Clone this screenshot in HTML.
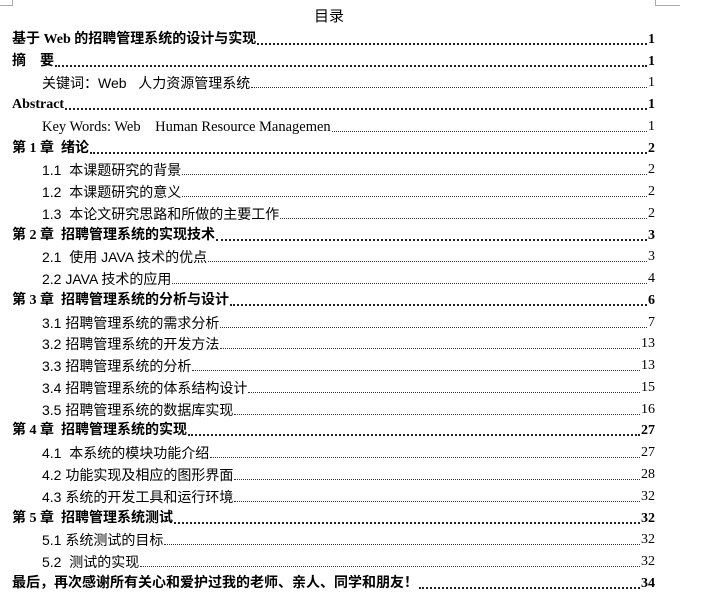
<!DOCTYPE html>
<html><head><meta charset="utf-8"><style>
body{margin:0;width:701px;height:601px;background:#fff;position:relative;overflow:hidden;font-family:"Liberation Serif","Noto Sans CJK SC",serif;color:#000}
.r{position:absolute;left:12px;width:643px;height:22px;display:flex;align-items:flex-end;font-size:14px;line-height:22px;white-space:nowrap}
.r.s{left:42px;width:613px;font-family:"Liberation Sans","Noto Sans CJK SC",sans-serif;font-size:14px}
.r.b{font-weight:bold}
.d{flex:1;border-bottom:1px dotted #333;margin:0 1px 6px 1px;height:0}
.b .d{border-bottom:2px dotted #222}
.n{font-family:"Liberation Serif",serif;font-size:14px}
.t{position:absolute;left:314px;top:5px;font-size:15px;font-family:"Liberation Sans","Noto Sans CJK SC",sans-serif}
.c1{position:absolute;left:0;top:5px;width:12px;height:0;border-top:1px solid #aaa}
.c1v{position:absolute;left:12px;top:0;height:6px;border-left:1px solid #aaa}
.c2{position:absolute;left:655px;top:5px;width:25px;border-top:1px solid #aaa}
.c2v{position:absolute;left:655px;top:0;height:6px;border-left:1px solid #aaa}
</style></head><body>
<div class="c1"></div><div class="c1v"></div><div class="c2"></div><div class="c2v"></div>
<div class="t">目录</div>
<div class="r b" style="top:29px"><span>基于 Web 的招聘管理系统的设计与实现</span><span class="d"></span><span class="n">1</span></div>
<div class="r b" style="top:51px"><span>摘&nbsp;&nbsp;&nbsp;&nbsp;要</span><span class="d"></span><span class="n">1</span></div>
<div class="r s" style="top:72px"><span>关键词：Web&nbsp;&nbsp;&nbsp;人力资源管理系统</span><span class="d"></span><span class="n">1</span></div>
<div class="r b" style="top:94px"><span>Abstract</span><span class="d"></span><span class="n">1</span></div>
<div class="r s" style="top:116px;font-family:'Liberation Serif',serif;font-size:14.5px"><span>Key Words: Web&nbsp;&nbsp;&nbsp;&nbsp;Human Resource Managemen</span><span class="d"></span><span class="n">1</span></div>
<div class="r b" style="top:138px"><span>第 1 章&nbsp;&nbsp;绪论</span><span class="d"></span><span class="n">2</span></div>
<div class="r s" style="top:159px"><span>1.1&nbsp;&nbsp;本课题研究的背景</span><span class="d"></span><span class="n">2</span></div>
<div class="r s" style="top:181px"><span>1.2&nbsp;&nbsp;本课题研究的意义</span><span class="d"></span><span class="n">2</span></div>
<div class="r s" style="top:203px"><span>1.3&nbsp;&nbsp;本论文研究思路和所做的主要工作</span><span class="d"></span><span class="n">2</span></div>
<div class="r b" style="top:225px"><span>第 2 章&nbsp;&nbsp;招聘管理系统的实现技术</span><span class="d"></span><span class="n">3</span></div>
<div class="r s" style="top:246px"><span>2.1&nbsp;&nbsp;使用 JAVA 技术的优点</span><span class="d"></span><span class="n">3</span></div>
<div class="r s" style="top:268px"><span>2.2 JAVA 技术的应用</span><span class="d"></span><span class="n">4</span></div>
<div class="r b" style="top:290px"><span>第 3 章&nbsp;&nbsp;招聘管理系统的分析与设计</span><span class="d"></span><span class="n">6</span></div>
<div class="r s" style="top:312px"><span>3.1 招聘管理系统的需求分析</span><span class="d"></span><span class="n">7</span></div>
<div class="r s" style="top:333px"><span>3.2 招聘管理系统的开发方法</span><span class="d"></span><span class="n">13</span></div>
<div class="r s" style="top:355px"><span>3.3 招聘管理系统的分析</span><span class="d"></span><span class="n">13</span></div>
<div class="r s" style="top:377px"><span>3.4 招聘管理系统的体系结构设计</span><span class="d"></span><span class="n">15</span></div>
<div class="r s" style="top:399px"><span>3.5 招聘管理系统的数据库实现</span><span class="d"></span><span class="n">16</span></div>
<div class="r b" style="top:420px"><span>第 4 章&nbsp;&nbsp;招聘管理系统的实现</span><span class="d"></span><span class="n">27</span></div>
<div class="r s" style="top:442px"><span>4.1&nbsp;&nbsp;本系统的模块功能介绍</span><span class="d"></span><span class="n">27</span></div>
<div class="r s" style="top:464px"><span>4.2 功能实现及相应的图形界面</span><span class="d"></span><span class="n">28</span></div>
<div class="r s" style="top:486px"><span>4.3&nbsp;系统的开发工具和运行环境</span><span class="d"></span><span class="n">32</span></div>
<div class="r b" style="top:508px"><span>第 5 章&nbsp;&nbsp;招聘管理系统测试</span><span class="d"></span><span class="n">32</span></div>
<div class="r s" style="top:529px"><span>5.1 系统测试的目标</span><span class="d"></span><span class="n">32</span></div>
<div class="r s" style="top:551px"><span>5.2&nbsp;&nbsp;测试的实现</span><span class="d"></span><span class="n">32</span></div>
<div class="r b" style="top:573px"><span>最后，再次感谢所有关心和爱护过我的老师、亲人、同学和朋友！</span><span class="d"></span><span class="n">34</span></div>
</body></html>
